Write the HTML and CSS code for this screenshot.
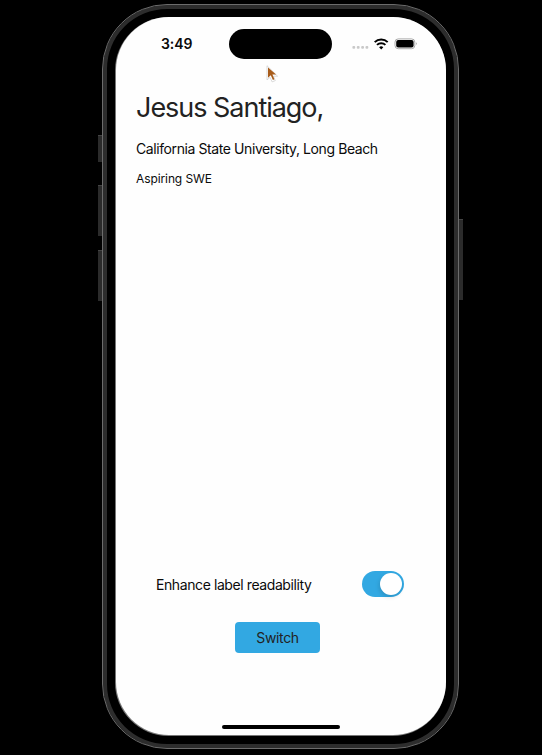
FILE: index.html
```html
<!DOCTYPE html>
<html lang="en">
<head>
<meta charset="utf-8">
<title>Profile</title>
<link rel="stylesheet" href="styles.css">
</head>
<body>
<div class="phone">
  <i class="key key-action"></i><i class="key key-up"></i><i class="key key-down"></i><i class="key key-power"></i>
  <div class="bezel">
    <div class="screen">
      <header class="status">
        <span class="time">3:49</span>
        <span class="island"></span>
        <svg class="indicators" width="66" height="14" viewBox="0 0 66 14">
          <g fill="#c9c9c9"><rect x="0.4" y="9" width="2.8" height="2.8" rx="1"/><rect x="4.8" y="9" width="2.8" height="2.8" rx="1"/><rect x="9.2" y="9" width="2.8" height="2.8" rx="1"/><rect x="13.5" y="9" width="2.8" height="2.8" rx="1"/></g>
          <g fill="none" stroke="#000" stroke-width="2"><path d="M22.7 5.1a9.3 9.3 0 0 1 13 0"/><path d="M25 7.9a6 6 0 0 1 8.4 0"/></g>
          <path d="M29.2 12.4l-2.1-2.1a3 3 0 0 1 4.2 0z"/>
          <rect x="43" y="1.9" width="19.8" height="9.8" rx="3.2" fill="#fff" stroke="#aaa"/>
          <rect x="44.2" y="3.1" width="17.4" height="7.4" rx="2"/>
          <path d="M64 5.3q1.2 1.4 0 2.8z" fill="#777"/>
        </svg>
      </header>
      <main class="profile">
        <h1 class="name">Jesus Santiago,</h1>
        <p class="school">California State University, Long Beach</p>
        <p class="role">Aspiring SWE</p>
      </main>
      <section class="controls">
        <div class="setting"><span class="label">Enhance label readability</span><span class="toggle"><i class="knob"></i></span></div>
        <button class="switch">Switch</button>
      </section>
      <div class="home"></div>
    </div>
  </div>
  <svg class="pointer" width="16" height="20" viewBox="0 0 16 20"><path d="M3 1.7v14.2l3.1-2.6 2 4.6 3.2-1.3-1.9-4.4h4.2z" fill="#fff" stroke="#ccc" stroke-width=".7"/><path d="M4 3.6v10.2l2.8-2.5 2.1 4.6 1.5-.6-2-4.7h3.7z" fill="#a85c1b"/></svg>
</div>
</body>
</html>
```
FILE: styles.css
```css
* { box-sizing: border-box; }
body {
  margin: 0;
  height: 755px;
  overflow: hidden;
  background: #000;
  color: #0a0a0a;
  font-family: Inter, "Liberation Sans", sans-serif;
}
h1, p { margin: 0; }
.phone {
  position: relative;
  width: 357px;
  height: 745px;
  margin: 4px 0 0 102px;
}
.bezel {
  position: relative;
  height: 100%;
  padding: 12px 12px 13px 13px;
  border: 1px solid #6c6c6c;
  border-radius: 65px;
  background: #000;
  box-shadow: inset 0 0 0 4px #2d2d2d;
}
.screen {
  display: flex;
  flex-direction: column;
  height: 100%;
  border-radius: 53px;
  background: #fefefe;
  box-shadow: -0.5px 0.5px 0 0.5px #777;
  clip-path: inset(0 0 -1px -1px);
}
.key {
  position: absolute;
  left: -4px;
  width: 5px;
  background: #2b2b2b;
  border-top: 1px solid #444;
}
.key-action { top: 131px; height: 27px; }
.key-up { top: 181px; height: 51px; }
.key-down { top: 246px; height: 51px; }
.key-power { left: 356px; top: 215px; height: 81px; }
.status {
  display: flex;
  align-items: center;
  height: 53px;
  padding-left: 45px;
}
.time {
  width: 68px;
  font-size: 14px;
  font-weight: 600;
  letter-spacing: -0.1px;
}
.island {
  width: 103px;
  height: 30px;
  border-radius: 15px;
  background: #000;
}
.indicators { margin-left: 20px; }
.profile { padding: 18px 0 0 20px; white-space: nowrap; }
.name {
  height: 41px;
  line-height: 40px;
  font-size: 27px;
  font-weight: 400;
  letter-spacing: -1.03px;
  color: #222;
}
.school {
  height: 40px;
  line-height: 40px;
  font-size: 14px;
  letter-spacing: -0.41px;
}
.role {
  line-height: 20px;
  font-size: 12px;
  letter-spacing: -0.1px;
}
.controls {
  display: flex;
  flex-direction: column;
  margin-top: auto;
  padding: 0 42px 0 40px;
}
.setting {
  display: flex;
  align-items: center;
  justify-content: space-between;
  height: 26px;
}
.label { font-size: 14px; letter-spacing: -0.41px; white-space: nowrap; }
.toggle {
  display: flex;
  justify-content: flex-end;
  width: 42px;
  height: 26px;
  padding: 2px;
  border-radius: 13px;
  background: #32a8e2;
}
.knob {
  width: 22px;
  height: 22px;
  border-radius: 50%;
  background: #fff;
  box-shadow: -1px 2px 4px #0002;
}
.switch {
  width: 85px;
  height: 31px;
  margin: 25px 0 0 79px;
  padding: 0;
  border: 0;
  border-radius: 4px;
  background: #32a8e2;
  color: #222;
  font: 14px Inter, sans-serif;
  letter-spacing: -0.35px;
}
.home {
  width: 118px;
  height: 4px;
  margin: 72px 0 6px 106px;
  border-radius: 2px;
  background: #000;
}
.pointer { position: absolute; left: 162px; top: 60px; }
```
